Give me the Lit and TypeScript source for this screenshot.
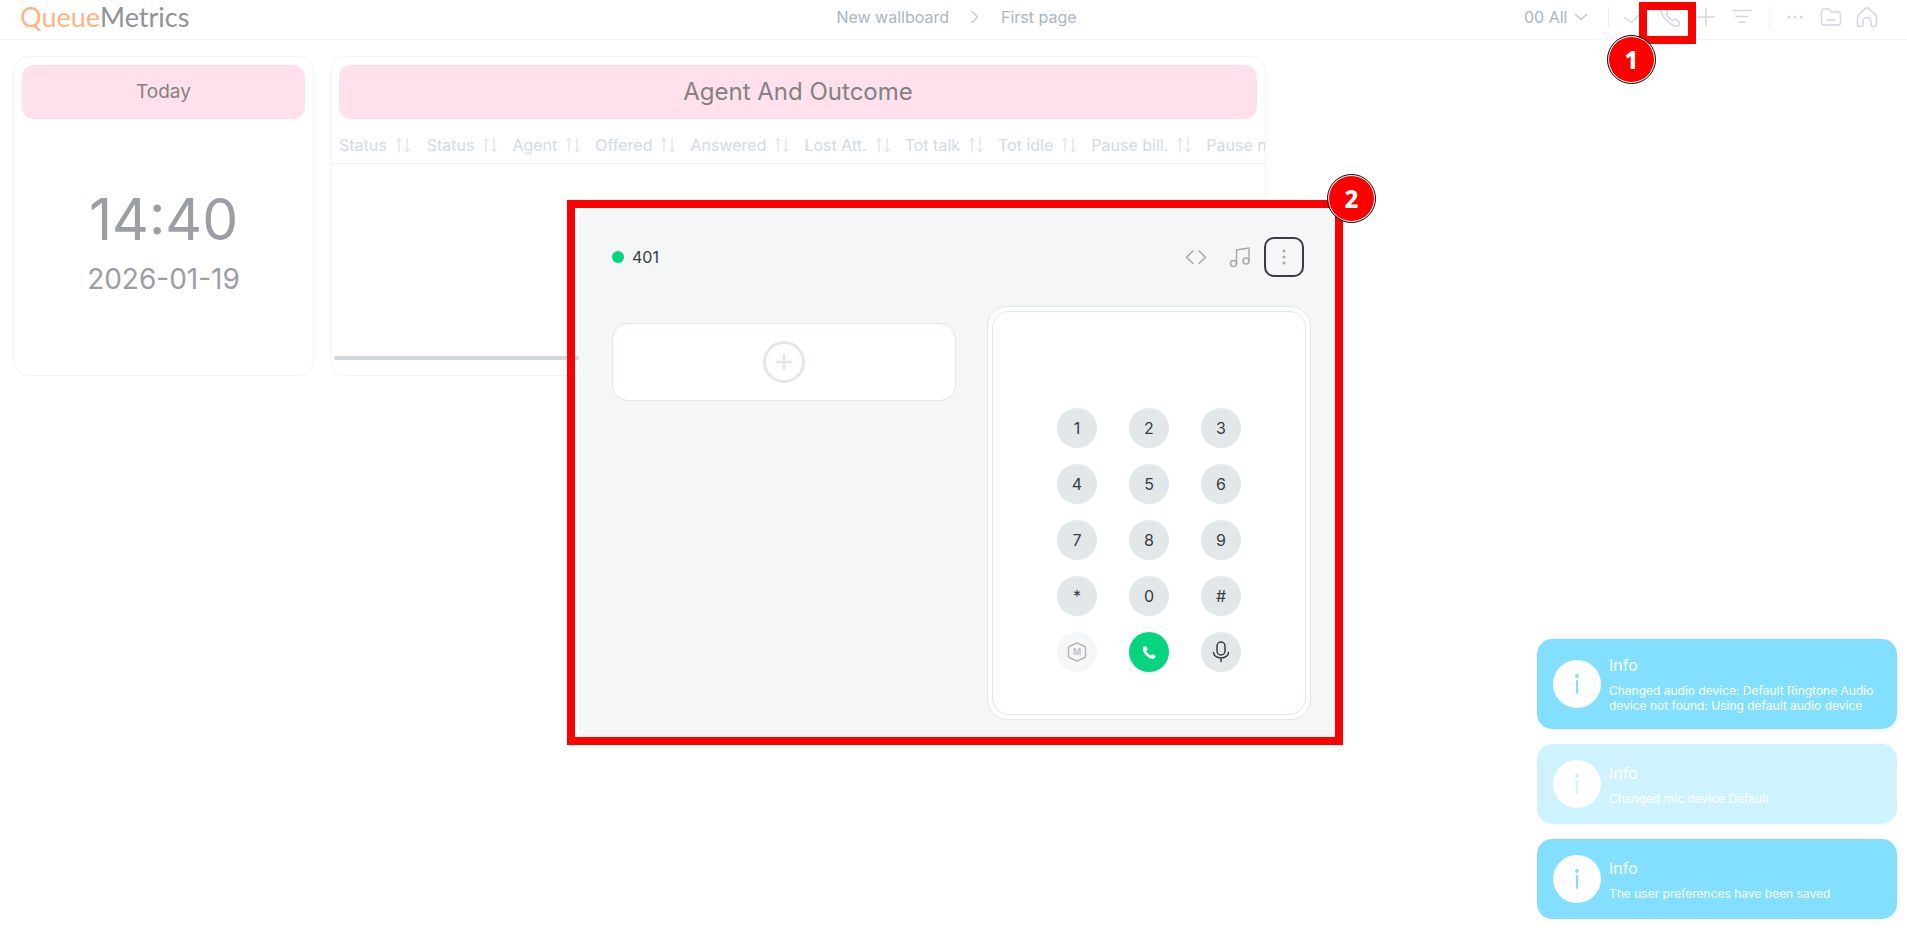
import { LitElement, html, css, svg } from "lit";
import { customElement, property } from "lit/decorators.js";
import { classMap } from "lit/directives/class-map.js";

const icon = (body: unknown, size = 24, cls = "") =>
  html`<svg class="icon ${cls}" width=${size} height=${size} viewBox="0 0 ${size} ${size}" fill="none"
    stroke="currentColor" stroke-width="1.5" stroke-linecap="round" stroke-linejoin="round" aria-hidden="true">${body}</svg>`;

const icons = {
  check: svg`<path d="M2 12.5 9.5 17.5 20 7"/>`,
  phone: svg`<path transform="translate(2 2)" d="M13.6 18.6l.1 0c2 1.300 4 .9 5.300-.8.9-1.200 1-2-.1-3.100l-2.700-2.200c-1-.7-1.800-.5-2.500.3-.9 1-1.500 1-2.600 0L7.200 8.900c-1-1.100-1-1.700-.1-2.500.9-.8 1-1.600.4-2.500L5.300 1.200C4.400.1 3.600.1 2.400.9.500 2.200.2 4.100 1.300 6.200c2.700 5.300 6.900 9.600 12.300 12.400z"/>`,
  plus: svg`<path d="M12 3.500v17M3.500 12h17"/>`,
  filter: svg`<path d="M3 5.500h18M6 11.500h12M9 17h6"/>`,
  more: svg`<g fill="currentColor" stroke="none"><circle cx="6" cy="12" r="1.500"/><circle cx="12" cy="12" r="1.500"/><circle cx="18" cy="12" r="1.500"/></g>`,
  folder: svg`<path d="M5 4h4.500l3 3H19a2.500 2.500 0 0 1 2.500 2.500v8A2.500 2.500 0 0 1 19 20H5a2.500 2.500 0 0 1-2.500-2.500v-11A2.500 2.500 0 0 1 5 4zM8.500 15h7"/>`,
  home: svg`<path d="M2.500 12c0-1 .4-1.700 1.200-2.400l6.800-6.200c.9-.8 2.100-.8 3 0l6.800 6.200c.8.700 1.200 1.400 1.200 2.400v7.500c0 1.200-.8 2-2 2h-1.500c-1.200 0-2-.8-2-2V16.500a4 4 0 0 0-8 0v3c0 1.200-.8 2-2 2H4.500c-1.200 0-2-.8-2-2z"/>`,
  code: svg`<path stroke-linejoin="miter" d="M9 6 2.500 12.200 9 18.500M15 6l6.500 6.200L15 18.500"/>`,
  music: svg`<path d="M8.500 18.500V5l12.500-2v13"/><circle cx="5.500" cy="18.500" r="3"/><circle cx="18" cy="16" r="3"/>`,
  kebab: svg`<g fill="currentColor" stroke="none"><circle cx="12" cy="6" r="1.500"/><circle cx="12" cy="12" r="1.500"/><circle cx="12" cy="18" r="1.500"/></g>`,
  addCircle: svg`<g stroke-width="3"><circle cx="22" cy="22" r="19.500"/><path stroke-width="2.500" d="M22 15v14M15 22h14"/></g>`,
  hexagon: svg`<path d="M12 2.800 19.500 6.500Q20.500 7 20.500 8v8q0 1-1 1.500L12 21.200 4.500 17.500Q3.500 17 3.500 16V8q0-1 1-1.500z"/>`,
  call: svg`<path fill="currentColor" stroke="none" d="M6.200 7.400c.5-.9 1.100-1.300 1.900-1.300.9 0 1.400.6 1.900 1.600.6 1.200.6 1.700-.1 2.500-.5.600-.5.900-.1 1.700.7 1.300 1.700 2.300 3 3 .8.400 1.200.4 1.700-.1.800-.7 1.400-.7 2.500-.1 1 .6 1.400 1.100 1.400 1.900 0 .9-.5 1.500-1.400 1.900-1.700.7-4.400-.2-6.700-2.100-2.800-2.400-5.300-6.300-4.100-9z"/>`,
  mic: svg`<rect x="8" y="2" width="8" height="13" rx="4"/><path d="M4.500 12.500a7.500 5.500 0 0 0 15 0M12 18v3.500"/>`,
  chevronRight: svg`<path d="M9 6.500 14.500 12 9 17.500"/>`,
  chevronDown: svg`<path d="M2.500 5.500 8 10.500l5.500-5"/>`,
  sort: svg`<path stroke-width="1" d="M4 15V1.500M1.500 4 4 1.500 6.500 4M12 1v13.500M9.500 12l2.500 2.500L14.500 12"/>`,
};

@customElement("info-toast")
class InfoToast extends LitElement {
  @property() message = "";
  @property({ type: Boolean }) fading = false;

  static styles = css`
    :host { display: block; }
    .toast {
      display: flex; align-items: center; gap: 8px; padding: 16px;
      border-radius: 15px; background: #82dfff; color: #fff;
    }
    .toast.fading { opacity: 0.38; }
    .mark {
      flex: none; display: grid; place-items: center; width: 48px; height: 48px;
      border-radius: 50%; background: #fff; color: #82dfff;
    }
    .title { margin: 0 0 8px; font-size: 16px; line-height: 20px; font-weight: 400; }
    .text { margin: 0; font-size: 12px; line-height: 15px; }
  `;

  render() {
    return html`<div class=${classMap({ toast: true, fading: this.fading })} role="status">
      <span class="mark"><svg width="24" height="24" viewBox="0 0 24 24" aria-hidden="true">
        <circle cx="12" cy="4" r="2" fill="currentColor"/>
        <path d="M12 9v12" stroke="currentColor" stroke-width="2" stroke-linecap="round"/>
      </svg></span>
      <div>
        <h2 class="title">Info</h2>
        <p class="text">${this.message}</p>
      </div>
    </div>`;
  }
}

@customElement("app-root")
class AppRoot extends LitElement {
  static styles = css`
    :host {
      display: block; position: relative; min-height: 100vh; overflow: hidden; background: #fff;
      font-family: Inter, "Liberation Sans", sans-serif; font-size: 16px; line-height: 20px; color: #abb5c0;
    }
    * { box-sizing: border-box; }
    button, select {
      margin: 0; padding: 0; border: 0; background: none; font: inherit; color: inherit; cursor: pointer;
    }
    a { color: inherit; text-decoration: none; }
    .icon { display: block; flex: none; }

    .topbar {
      display: grid; grid-template-columns: 1fr auto 1fr; height: 40px;
      padding: 0 14px 5px 20px; border-bottom: 1px solid #f3f4f5;
    }
    .logo {
      display: flex; align-items: center; font-family: Lato, "Liberation Sans", sans-serif;
      font-size: 27px; line-height: 34px; color: #919396;
    }
    .logo span { color: #ffb380; }
    .crumbs { display: flex; align-items: center; gap: 14px; color: #abb5c0; }
    .crumbs .icon { color: #c5ccd4; }
    .tools { display: flex; justify-content: flex-end; margin-right: 8px; color: #d2d8df; }
    .page-select { display: flex; align-items: center; gap: 5px; margin-right: 10px; color: #abb5c0; }
    .page-select select { appearance: none; outline: none; }
    .page-select .icon { color: #c5ccd4; }
    .tool { position: relative; display: grid; place-items: center; width: 36px; }
    .rule { width: 1px; height: 20px; margin: 7px 7px 7px 9px; background: #eceef0; }

    .board {
      display: grid; gap: 16px; padding: 16px 13px;
      grid-template-columns: minmax(0, 301fr) minmax(0, 936fr) minmax(0, 612fr);
    }
    .card {
      display: flex; flex-direction: column; min-height: 320px; overflow: hidden;
      border: 1px solid #f3f4f5; border-radius: 16px;
    }
    .card-title {
      margin: 8px; padding: 12px; border-radius: 12px; background: #ffe0ec; color: #828282;
      font-weight: 400; line-height: 30px; text-align: center;
    }
    .card-title.small { font-size: 19px; }
    .card-title.large { font-size: 24px; }
    .clock {
      flex: 1; display: flex; flex-direction: column; align-items: center; justify-content: center;
      padding-bottom: 15px; color: #9b9ea5;
    }
    .time { font-size: 57px; line-height: 70px; }
    .date { font-size: 28px; line-height: 48px; }
    .table-wrap { flex: 1; overflow: hidden; }
    table { border-collapse: collapse; min-width: 100%; }
    th {
      padding: 0 8px 0 6px; border-bottom: 1px solid #eff1f3; height: 36px;
      font-weight: 400; text-align: left; white-space: nowrap; color: #d3dae1;
    }
    th:first-child { padding: 0 10px 0 8px; }
    th .sort { display: flex; align-items: center; gap: 8px; }
    .scroll-thumb { width: 62%; height: 4px; margin: 0 3px 15px; border-radius: 2px; background: #d2d7dd; }

    .layer {
      position: absolute; top: 205px; left: 0; right: 0; display: flex; justify-content: center;
      padding-left: 11px; pointer-events: none;
    }
    .phone {
      position: relative; width: 760px; padding: 32px 28px 21px 33px; border-radius: 16px;
      background: #f4f6f8; color: #373b43; pointer-events: auto; box-shadow: 0 0 2px #dfe2e5;
    }
    .phone-head { display: flex; align-items: center; gap: 4px; padding-right: 7px; }
    .line { display: flex; align-items: center; gap: 8px; margin-right: auto; }
    .dot { width: 12px; height: 12px; border-radius: 50%; background: #06d47f; }
    .head-btn {
      display: grid; place-items: center; width: 40px; height: 40px; border-radius: 10px; color: #a9a9a9;
    }
    .head-btn.focused { border: 2px solid #373b45; }
    .phone-body {
      display: grid; grid-template-columns: 344px 324px; justify-content: space-between;
      align-items: start; margin-top: 29px;
    }
    .new-call {
      display: grid; place-items: center; height: 78px; margin-top: 17px;
      border: 1px solid #e2e8ea; border-radius: 16px; background: #fff; color: #e2e8ea;
    }
    .dialer { padding: 4px; border: 1px solid #e2e8ea; border-radius: 21px; background: #fff; }
    .dialer-inner { padding: 96px 0 42px; border: 1px solid #e2e8ea; border-radius: 17px; }
    .keys { display: grid; grid-template-columns: repeat(3, 40px); gap: 16px 32px; justify-content: center; }
    .key {
      display: grid; place-items: center; width: 40px; height: 40px; border-radius: 50%;
      background: #e2e8ea; color: #373b43;
    }
    .key.muted { background: #f4f6f8; color: #b4b6b9; }
    .key.muted > * { grid-area: 1 / 1; }
    .key.muted span { font-size: 9px; line-height: 12px; font-weight: 500; }
    .key.call { background: #06d47f; color: #fff; }

    .frame { position: absolute; border: 8px solid #f00; pointer-events: none; }
    .frame.tool-frame { top: 2px; right: -8px; bottom: -10px; left: -13px; z-index: 1; }
    .frame.phone-frame { top: -5px; right: -4px; bottom: -4px; left: -12px; }
    .badge {
      position: absolute; display: grid; place-items: center; width: 47px; height: 47px; border-radius: 50%;
      border: 1px solid #fff; outline: 1px solid #000; background: #f00; color: #fff;
      font: 800 24px/30px "Noto Sans", "Open Sans", sans-serif; z-index: 2;
    }
    .badge.tool-badge { top: 36px; left: -44px; }
    .badge.phone-badge { top: -30px; right: -36px; }

    .toasts {
      position: absolute; right: 10px; bottom: 15px; width: 360px;
      display: flex; flex-direction: column; gap: 15px;
    }
  `;

  private columns = ["Status", "Status", "Agent", "Offered", "Answered", "Lost Att.", "Tot talk", "Tot idle", "Pause bill.", "Pause n.bill."];
  private keys = ["1", "2", "3", "4", "5", "6", "7", "8", "9", "*", "0", "#"];

  private tool(name: string, body: unknown, extra: unknown = "") {
    return html`<button class="tool" aria-label=${name}>${icon(body)}${extra}</button>`;
  }

  render() {
    return html`
      <header class="topbar">
        <a class="logo" href="#"><span>Queue</span>Metrics</a>
        <nav class="crumbs" aria-label="Breadcrumb">
          <a href="#">New wallboard</a>${icon(icons.chevronRight)}<a href="#">First page</a>
        </nav>
        <div class="tools">
          <label class="page-select">
            <select aria-label="Queue"><option>00 All</option></select>
            ${icon(icons.chevronDown, 16)}
          </label>
          <span class="rule"></span>
          ${this.tool("Confirm", icons.check)}
          ${this.tool("Softphone", icons.phone, html`<span class="frame tool-frame"></span><span class="badge tool-badge">1</span>`)}
          ${this.tool("Add", icons.plus)}
          ${this.tool("Filter", icons.filter)}
          <span class="rule"></span>
          ${this.tool("More", icons.more)}
          ${this.tool("Folder", icons.folder)}
          ${this.tool("Home", icons.home)}
        </div>
      </header>

      <main class="board">
        <section class="card">
          <h2 class="card-title small">Today</h2>
          <div class="clock"><div class="time">14:40</div><div class="date">2026-01-19</div></div>
        </section>
        <section class="card">
          <h2 class="card-title large">Agent And Outcome</h2>
          <div class="table-wrap">
            <table>
              <thead><tr>${this.columns.map((c) => html`<th scope="col"><span class="sort">${c}${icon(icons.sort, 16)}</span></th>`)}</tr></thead>
            </table>
          </div>
          <div class="scroll-thumb"></div>
        </section>
      </main>

      <div class="layer">
        <section class="phone" aria-label="Softphone">
          <div class="phone-head">
            <div class="line"><span class="dot"></span>401</div>
            <button class="head-btn" aria-label="Code">${icon(icons.code)}</button>
            <button class="head-btn" aria-label="Audio">${icon(icons.music)}</button>
            <button class="head-btn focused" aria-label="Options">${icon(icons.kebab)}</button>
          </div>
          <div class="phone-body">
            <button class="new-call" aria-label="New call">${icon(icons.addCircle, 44)}</button>
            <div class="dialer">
              <div class="dialer-inner">
                <div class="keys">
                  ${this.keys.map((k) => html`<button class="key">${k}</button>`)}
                  <button class="key muted" aria-label="Mute">${icon(icons.hexagon)}<span>M</span></button>
                  <button class="key call" aria-label="Call">${icon(icons.call)}</button>
                  <button class="key" aria-label="Microphone">${icon(icons.mic)}</button>
                </div>
              </div>
            </div>
          </div>
          <span class="frame phone-frame"></span>
          <span class="badge phone-badge">2</span>
        </section>
      </div>

      <aside class="toasts">
        <info-toast message="Changed audio device: Default Ringtone Audio device not found: Using default audio device"></info-toast>
        <info-toast fading message="Changed mic device Default"></info-toast>
        <info-toast message="The user preferences have been saved"></info-toast>
      </aside>
    `;
  }
}
